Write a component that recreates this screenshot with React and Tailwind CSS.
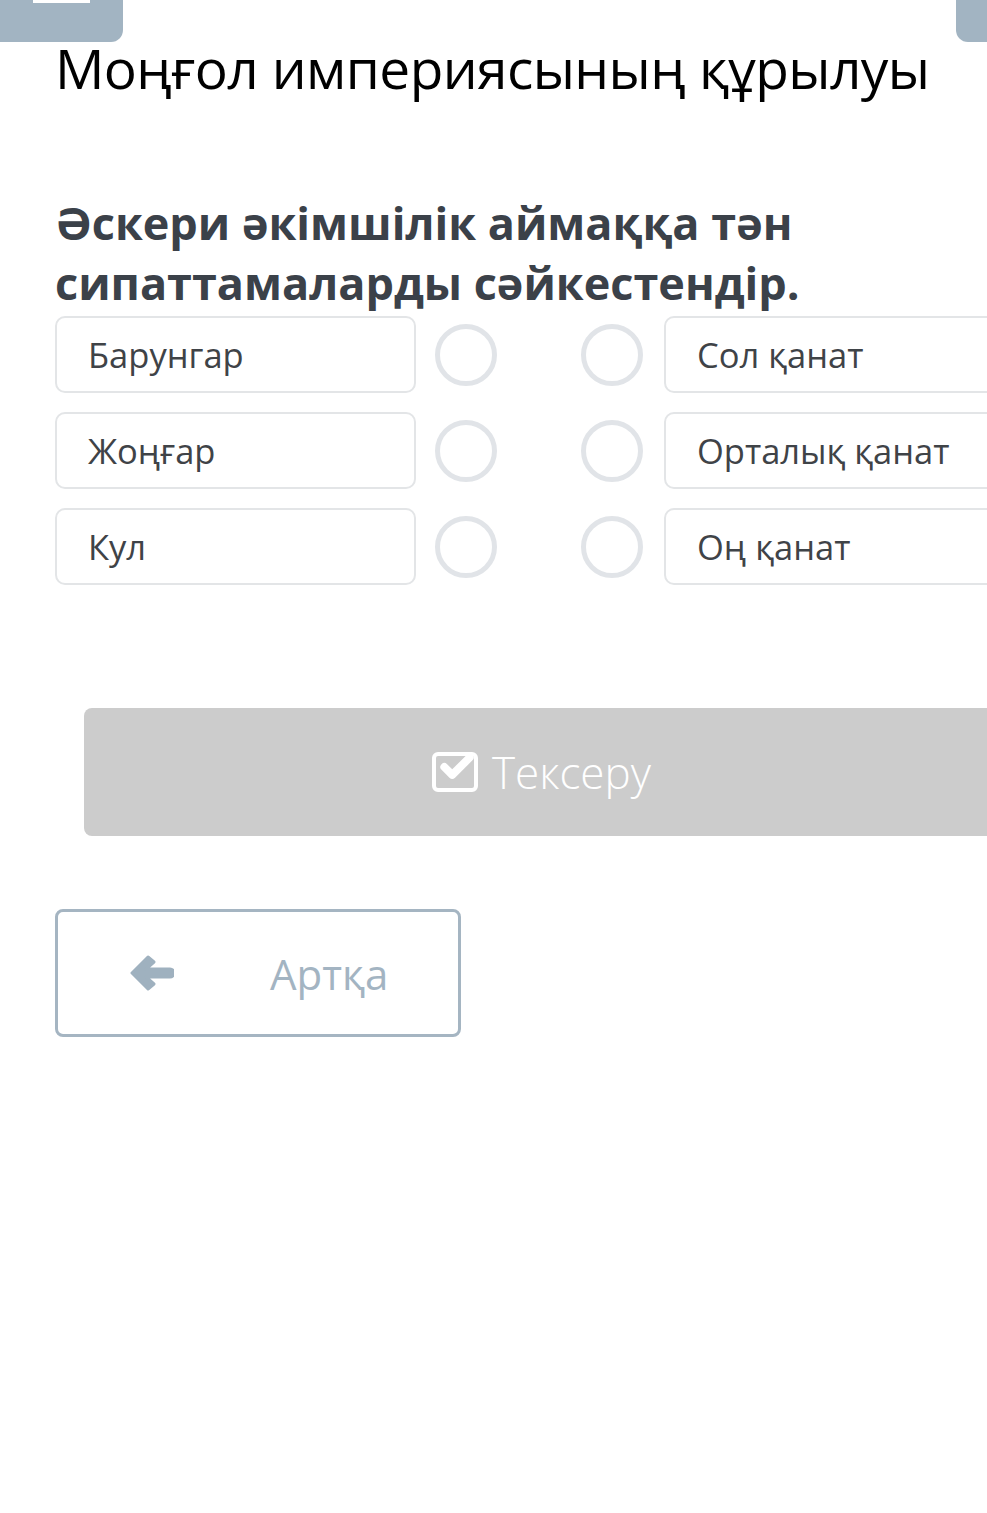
import { Check } from 'lucide-react';

const left = ['Барунгар', 'Жоңғар', 'Кул'];
const right = ['Сол қанат', 'Орталық қанат', 'Оң қанат'];

const Circle = () => (
  <div className="w-[62px] h-[62px] rounded-full border-[5px] border-[#e1e4e8] shrink-0" />
);

const App = () => {
  return (
    <div
      className="w-[987px] min-h-[1513px] bg-white overflow-hidden"
      style={{ fontFamily: '"Open Sans", "Noto Sans", sans-serif' }}
    >
      {/* top tabs */}
      <div className="flex justify-between h-[42px]">
        <div className="w-[123px] h-full bg-[#a2b4c2] rounded-br-xl relative">
          <div className="absolute left-[33px] top-0 w-[57px] h-[3px] bg-white" />
        </div>
        <div className="w-[31px] h-full bg-[#a2b4c2] rounded-bl-xl" />
      </div>

      <div className="pl-[55px]">
        <h1 className="-mt-[2px] text-[55px] leading-[56px] tracking-[-0.6px] text-black font-normal whitespace-nowrap">
          Моңғол империясының құрылуы
        </h1>

        <h2 className="mt-[97px] text-[45px] leading-[60px] font-bold text-[#3b4149] whitespace-nowrap">
          Әскери әкімшілік аймаққа тән
          <br />
          сипаттамаларды сәйкестендір.
        </h2>

        <div className="mt-[3px] flex flex-col gap-[19px]">
          {left.map((l, i) => (
            <div key={l} className="flex items-center h-[77px]">
              <div className="w-[361px] h-full border-2 border-[#e3e5e7] rounded-[10px] flex items-center pl-[31px] text-[34.5px] text-[#3f4347] shrink-0">
                {l}
              </div>
              <div className="ml-[19px]"><Circle /></div>
              <div className="ml-[84px]"><Circle /></div>
              <div className="ml-[21px] w-[400px] h-full border-2 border-[#e3e5e7] rounded-[10px] flex items-center pl-[31px] text-[34.5px] text-[#3f4347] shrink-0 whitespace-nowrap">
                {right[i]}
              </div>
            </div>
          ))}
        </div>

        <div className="mt-[123px] ml-[29px] w-[950px] h-[128px] bg-[#cccccc] rounded-lg flex items-center pl-[348px] gap-[14px] text-white">
          <span className="w-[46px] h-[40px] border-[4px] border-white rounded-md relative">
            <Check className="absolute -top-[8px] left-[2px] w-[38px] h-[38px]" strokeWidth={5} />
          </span>
          <span className="text-[44px] leading-none font-light">Тексеру</span>
        </div>

        <div className="mt-[73px] w-[406px] h-[128px] border-[3px] border-[#a5b5c2] rounded-lg flex items-center">
          <svg viewBox="0 0 44 36" className="ml-[72px] w-[44px] h-[36px]" fill="#9fb1bf">
            <path d="M18 2 L2 18 L18 34 L24 29 L16 22 L40 22 A4 4 0 0 0 40 14 L16 14 L24 7 Z" strokeLinejoin="round" stroke="#9fb1bf" strokeWidth="3" />
          </svg>
          <span className="ml-[96px] text-[42px] text-[#a3b4c2]">Артқа</span>
        </div>
      </div>
    </div>
  );
};

export default App;
